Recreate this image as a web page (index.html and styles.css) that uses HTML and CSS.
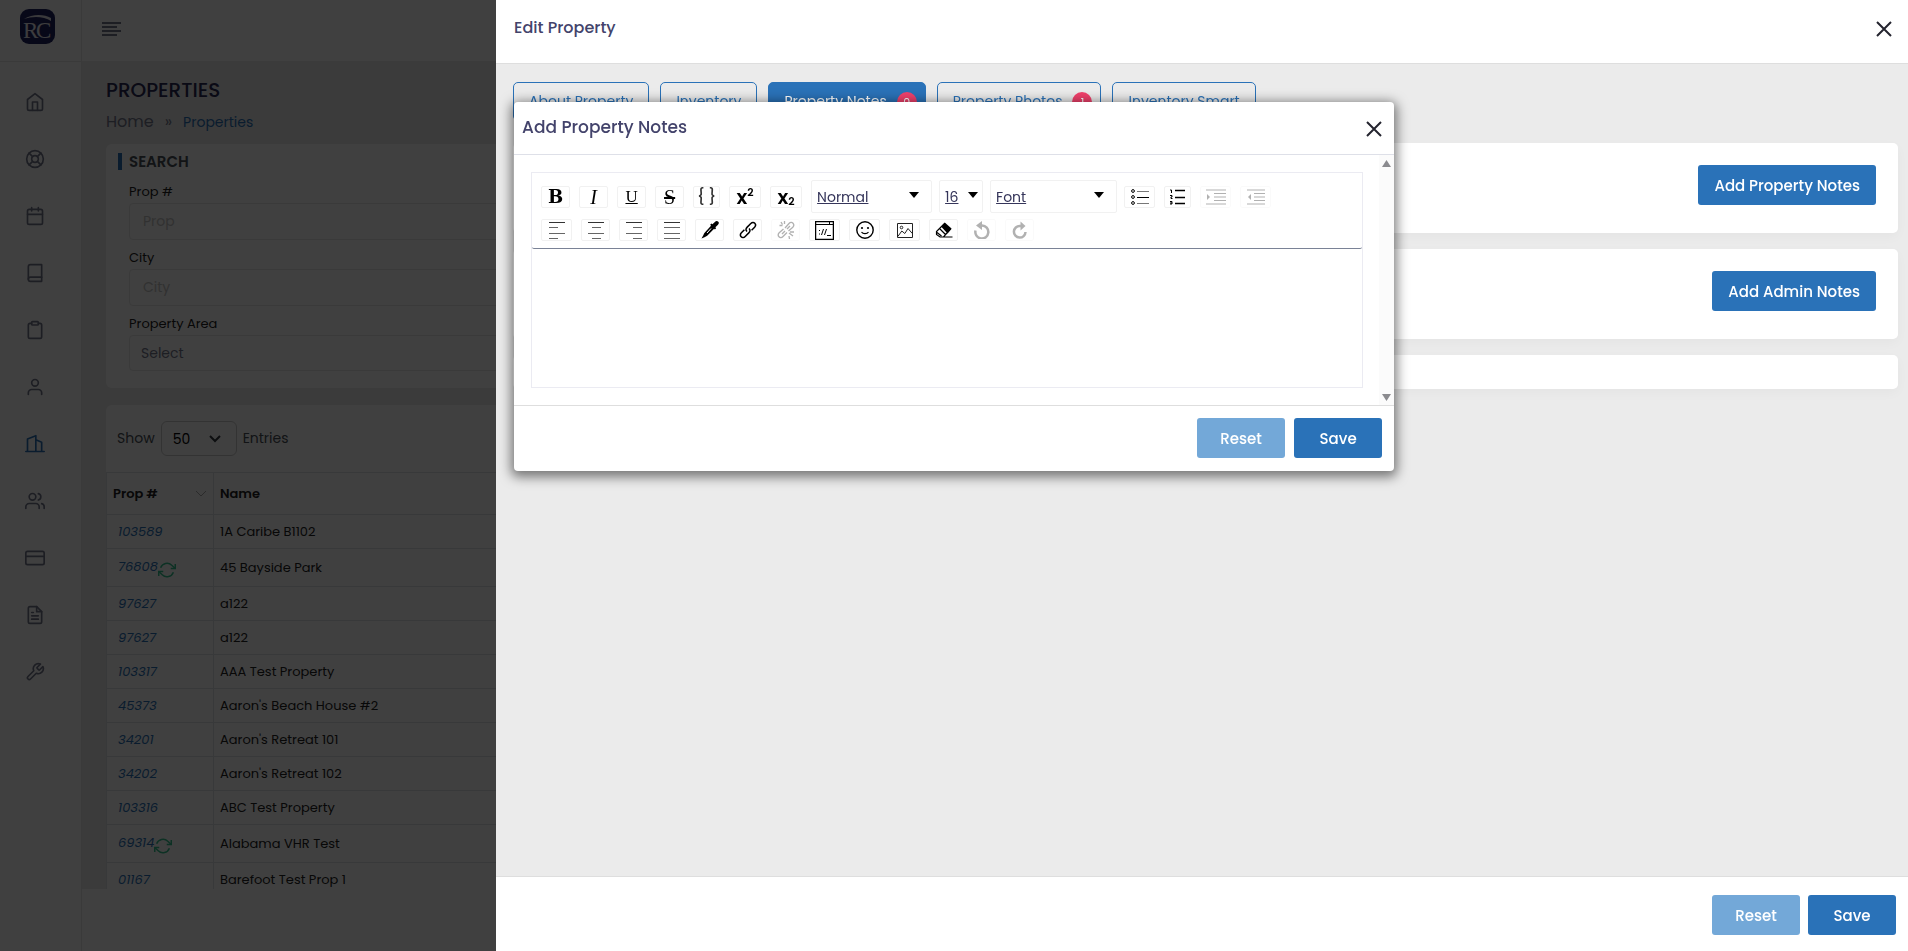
FILE: index.html
```html
<!DOCTYPE html>
<html lang="en">
<head>
  <meta charset="UTF-8" />
  <meta name="viewport" content="width=device-width, initial-scale=1.0" />
  <title>Properties</title>
  <link rel="stylesheet" href="styles.css">
</head>
<body>

  <div class="layout">
    <aside class="sidebar">
      <a href="#" class="logo" aria-label="Dashboard">
        <svg width="35" height="35" viewBox="0 0 35 35">
          <rect width="35" height="35" rx="9" fill="#1f2362"/>
          <path d="M4 10C12 5 24 5 31 9v3C24 7 12 7 4 10z" fill="#e8e8f0"/>
          <text x="3" y="29" font-family="Liberation Serif, serif" font-size="23" fill="#f0f0f5">R</text>
          <text x="16" y="29" font-family="Liberation Serif, serif" font-size="23" fill="#f0f0f5">C</text>
        </svg>
      </a>
      <nav class="side-nav">
        <a href="#" aria-label="Home"><svg viewBox="0 0 24 24"><path d="M3 9l9-7 9 7v11a2 2 0 0 1-2 2H5a2 2 0 0 1-2-2z"/><path d="M9 22V12h6v10"/></svg></a>
        <a href="#" aria-label="Support"><svg viewBox="0 0 24 24"><circle cx="12" cy="12" r="10"/><circle cx="12" cy="12" r="4"/><path d="M4.93 4.93l4.24 4.24M14.83 14.83l4.24 4.24M14.83 9.17l4.24-4.24M4.93 19.07l4.24-4.24"/></svg></a>
        <a href="#" aria-label="Calendar"><svg viewBox="0 0 24 24"><rect x="3" y="4" width="18" height="18" rx="2"/><path d="M16 2v4M8 2v4M3 10h18"/></svg></a>
        <a href="#" aria-label="Ledger"><svg viewBox="0 0 24 24"><path d="M4 19.5A2.5 2.5 0 0 1 6.5 17H20"/><path d="M6.5 2H20v20H6.5A2.5 2.5 0 0 1 4 19.5v-15A2.5 2.5 0 0 1 6.5 2z"/></svg></a>
        <a href="#" aria-label="Tasks"><svg viewBox="0 0 24 24"><path d="M16 4h2a2 2 0 0 1 2 2v14a2 2 0 0 1-2 2H6a2 2 0 0 1-2-2V6a2 2 0 0 1 2-2h2"/><rect x="8" y="2" width="8" height="4" rx="1"/></svg></a>
        <a href="#" aria-label="Owner"><svg viewBox="0 0 24 24"><path d="M20 21v-2a4 4 0 0 0-4-4H8a4 4 0 0 0-4 4v2"/><circle cx="12" cy="7" r="4"/></svg></a>
        <a href="#" class="active" aria-label="Properties"><svg viewBox="0 0 24 24"><path d="M1 21h22M3 21V6l10-4v19M13 7l7 3v11"/></svg></a>
        <a href="#" aria-label="Users"><svg viewBox="0 0 24 24"><path d="M17 21v-2a4 4 0 0 0-4-4H5a4 4 0 0 0-4 4v2"/><circle cx="9" cy="7" r="4"/><path d="M23 21v-2a4 4 0 0 0-3-3.87M16 3.13a4 4 0 0 1 0 7.75"/></svg></a>
        <a href="#" aria-label="Payments"><svg viewBox="0 0 24 24"><rect x="1" y="4" width="22" height="16" rx="2"/><path d="M1 10h22"/></svg></a>
        <a href="#" aria-label="Reports"><svg viewBox="0 0 24 24"><path d="M14 2H6a2 2 0 0 0-2 2v16a2 2 0 0 0 2 2h12a2 2 0 0 0 2-2V8z"/><path d="M14 2v6h6M16 13H8M16 17H8M10 9H8"/></svg></a>
        <a href="#" aria-label="Settings"><svg viewBox="0 0 24 24"><path d="M14.7 6.3a1 1 0 0 0 0 1.4l1.6 1.6a1 1 0 0 0 1.4 0l3.77-3.77a6 6 0 0 1-7.94 7.94l-6.91 6.91a2.12 2.12 0 0 1-3-3l6.91-6.91a6 6 0 0 1 7.94-7.94l-3.76 3.76z"/></svg></a>
      </nav>
    </aside>

    <div class="page">
      <header class="topbar">
        <button type="button" class="menu-toggle" aria-label="Toggle menu">
          <svg width="20" height="14" viewBox="0 0 20 14"><path d="M0 1h19M0 5h15M0 9h19M0 13h15" stroke="#74788d" stroke-width="2"/></svg>
        </button>
      </header>

      <main class="content">
        <h1>PROPERTIES</h1>
        <div class="breadcrumb">
          <a href="#" class="crumb-home">Home</a>
          <span>»</span>
          <a href="#" class="crumb-current">Properties</a>
        </div>

        <section class="card search">
          <h2>SEARCH</h2>
          <div class="fields">
            <label for="prop">Prop #</label>
            <input type="text" id="prop" placeholder="Prop">
            <label for="city">City</label>
            <input type="text" id="city" placeholder="City">
            <label for="area">Property Area</label>
            <select id="area"><option>Select</option></select>
          </div>
        </section>

        <section class="card listing">
          <div class="entries">
            <label for="entries">Show</label>
            <select id="entries"><option>50</option></select>
            <span>Entries</span>
          </div>
          <table>
            <thead>
              <tr>
                <th class="col-id"><span class="th-sort">Prop # <svg width="12" height="7" viewBox="0 0 12 7"><path d="M1 1l5 5 5-5" fill="none" stroke="#aaa"/></svg></span></th>
                <th>Name</th>
              </tr>
            </thead>
            <tbody>
              <tr><td><a href="#">103589</a></td><td>1A Caribe B1102</td></tr>
              <tr class="synced"><td><a href="#">76808</a><svg class="sync" viewBox="0 0 24 24"><path d="M23 4v6h-6M1 20v-6h6"/><path d="M3.51 9a9 9 0 0 1 14.85-3.36L23 10M1 14l4.64 4.36A9 9 0 0 0 20.49 15"/></svg></td><td>45 Bayside Park</td></tr>
              <tr><td><a href="#">97627</a></td><td>a122</td></tr>
              <tr><td><a href="#">97627</a></td><td>a122</td></tr>
              <tr><td><a href="#">103317</a></td><td>AAA Test Property</td></tr>
              <tr><td><a href="#">45373</a></td><td>Aaron's Beach House #2</td></tr>
              <tr><td><a href="#">34201</a></td><td>Aaron's Retreat 101</td></tr>
              <tr><td><a href="#">34202</a></td><td>Aaron's Retreat 102</td></tr>
              <tr><td><a href="#">103316</a></td><td>ABC Test Property</td></tr>
              <tr class="synced"><td><a href="#">69314</a><svg class="sync" viewBox="0 0 24 24"><path d="M23 4v6h-6M1 20v-6h6"/><path d="M3.51 9a9 9 0 0 1 14.85-3.36L23 10M1 14l4.64 4.36A9 9 0 0 0 20.49 15"/></svg></td><td>Alabama VHR Test</td></tr>
              <tr><td><a href="#">01167</a></td><td>Barefoot Test Prop 1</td></tr>
            </tbody>
          </table>
        </section>
      </main>
      <footer class="page-footer"></footer>
    </div>
  </div>

  <div class="backdrop"></div>

  <!-- Edit property panel -->
  <section class="panel">
    <header class="panel-header">
      <h2>Edit Property</h2>
      <button type="button" class="close" aria-label="Close panel">
        <svg width="16" height="16" viewBox="0 0 16 16"><path d="M1 1l14 14M15 1L1 15"/></svg>
      </button>
    </header>

    <div class="panel-body">
      <nav class="tabs">
        <button type="button">About Property</button>
        <button type="button">Inventory</button>
        <button type="button" class="selected">Property Notes <span class="count">0</span></button>
        <button type="button">Property Photos <span class="count">1</span></button>
        <button type="button">Inventory Smart</button>
      </nav>
      <div class="notes-card">
        <button type="button" class="btn btn-primary">Add Property Notes</button>
      </div>
      <div class="notes-card">
        <button type="button" class="btn btn-primary">Add Admin Notes</button>
      </div>
      <div class="notes-card empty"></div>
    </div>

    <footer class="panel-footer">
      <button type="button" class="btn btn-light">Reset</button>
      <button type="button" class="btn btn-primary">Save</button>
    </footer>

    <!-- Add notes modal -->
    <div class="modal" role="dialog" aria-labelledby="modal-title">
      <header class="modal-header">
        <h3 id="modal-title">Add Property Notes</h3>
        <button type="button" class="close close-bold" aria-label="Close">
          <svg width="16" height="16" viewBox="0 0 16 16"><path d="M1 1l14 14M15 1L1 15"/></svg>
        </button>
      </header>

      <div class="modal-body">
        <div class="editor">
          <div class="toolbar">
            <div class="tool-row">
              <button type="button" class="tool bold" aria-label="Bold">B</button>
              <button type="button" class="tool italic" aria-label="Italic">I</button>
              <button type="button" class="tool underline" aria-label="Underline">U</button>
              <button type="button" class="tool strike" aria-label="Strikethrough">S</button>
              <button type="button" class="tool mono" aria-label="Monospace">{ }</button>
              <button type="button" class="tool script" aria-label="Superscript">x<sup>2</sup></button>
              <button type="button" class="tool script" aria-label="Subscript">x<sub>2</sub></button>
              <select class="block-type" aria-label="Block type"><option>Normal</option></select>
              <select class="font-size" aria-label="Font size"><option>16</option></select>
              <select class="font-family" aria-label="Font"><option>Font</option></select>
              <button type="button" class="tool wide" aria-label="Bulleted list">
                <svg width="18" height="16" viewBox="0 0 18 16"><g fill="none" stroke="#000"><circle cx="2" cy="2" r="1.4"/><circle cx="2" cy="8" r="1.4"/><circle cx="2" cy="14" r="1.4"/><path d="M6 8.5h12"/><path d="M6 2.5h12M6 14.5h12" stroke="#777"/></g></svg>
              </button>
              <button type="button" class="tool narrow" aria-label="Numbered list">
                <svg width="15" height="16" viewBox="0 0 15 16"><path d="M5 1.5h10M5 8.500h10M5 14.500h10" stroke="#000" stroke-width="1.500"/><path d="M0 1h1.500v3M0 6.500h2v1.500H1v1.500h1.500M0 12.500h2v2.500H0M0 14h2" fill="none" stroke="#000"/></svg>
              </button>
              <button type="button" class="tool wide" disabled aria-label="Indent">
                <svg width="20" height="16" viewBox="0 0 20 16"><path d="M0 1h20M8 4.5h12M8 8h12M8 11.5h12M0 15h20" stroke="#000"/><path d="M1 5l3 3-3 3z"/></svg>
              </button>
              <button type="button" class="tool wide" disabled aria-label="Outdent">
                <svg width="18" height="16" viewBox="0 0 18 16"><path d="M0 1h18M7 4.5h11M7 8h11M7 11.5h11M0 15h18" stroke="#000"/><path d="M4 5L1 8l3 3z"/></svg>
              </button>
            </div>
            <div class="tool-row">
              <button type="button" class="tool wide" aria-label="Align left">
                <svg width="16" height="18" viewBox="0 0 16 18"><path d="M0 1.5h16" stroke="#333"/><path d="M0 6.5h9M0 12.500h16M0 17.500h9" stroke="#666"/></svg>
              </button>
              <button type="button" class="tool" aria-label="Align center">
                <svg width="16" height="18" viewBox="0 0 16 18"><path d="M0 1.5h16" stroke="#333"/><path d="M4 6.5h9M0 12.500h16M4 17.500h9" stroke="#666"/></svg>
              </button>
              <button type="button" class="tool" aria-label="Align right">
                <svg width="16" height="18" viewBox="0 0 16 18"><path d="M0 1.5h16" stroke="#333"/><path d="M7 6.5h9M0 12.500h16M7 17.500h9" stroke="#666"/></svg>
              </button>
              <button type="button" class="tool" aria-label="Justify">
                <svg width="16" height="18" viewBox="0 0 16 18"><path d="M0 1.5h16" stroke="#333"/><path d="M0 6.5h16M0 12.500h16M0 17.500h16" stroke="#666"/></svg>
              </button>
              <button type="button" class="tool" aria-label="Text color">
                <svg width="18" height="18" viewBox="0 0 18 18"><path d="M17.3.8c-1-1-2.400-.9-3.400.1l-2.500 2.300-1-.7-1.200 1.300.8.9-6.600 7.200c-.7.8-.8 2-1.500 3L.5 17.500l3-1.200c.9-.5 2-.8 2.700-1.500l6.900-7 .8.700 1.200-1.200-.7-1.100 2.600-2.500c1-1 1.100-2.100.3-2.900z"/><path d="M6 12l4-4.500" stroke="#fff"/></svg>
              </button>
              <button type="button" class="tool" aria-label="Link">
                <svg width="18" height="18" viewBox="0 0 18 18"><g fill="none" stroke="#000" stroke-width="1.5"><path d="M8 10.500c-1.500-1.500-1.200-3 .2-4.400l3.600-3.600c1.400-1.400 3-1.400 4-.3s1.100 2.600-.2 4l-3 3"/><path d="M10 7.500c1.500 1.500 1.200 3-.2 4.400l-3.600 3.600c-1.400 1.400-3 1.400-4 .3s-1.100-2.600.2-4l3-3"/></g></svg>
              </button>
              <button type="button" class="tool" disabled aria-label="Unlink">
                <svg width="18" height="18" viewBox="0 0 18 18"><g fill="none" stroke="#000" stroke-width="1.3"><path d="M8 7l4-4.500c1.400-1.400 3-1.400 4-.3s1.100 2.600-.2 4L11.500 10"/><path d="M10 11.500l-4 4c-1.400 1.400-3 1.400-4 .3s-1.100-2.600.2-4L6.500 8M5 13l3-3M10 8l3-3M2.500 4.500h3M4 1l1.500 2.500M7.500 0v3M12 12l4 3M12 15l.5 3M13 11h4"/></g></svg>
              </button>
              <button type="button" class="tool wide" aria-label="Embed">
                <svg width="19" height="19" viewBox="0 0 19 19"><g fill="none" stroke="#000"><path d="M.5.5h18v18H.5z" stroke-width="1.500"/><path d="M1 3.500h17M14.500 1v2.500"/><path d="M6.500 14l2-6M9.500 14l2-6M12 14.500h4M4.500 9v1M4.500 12.500v1"/></g></svg>
              </button>
              <button type="button" class="tool wide" aria-label="Emoji">
                <svg width="18" height="18" viewBox="0 0 18 18"><circle cx="9" cy="9" r="8.200" fill="none" stroke="#000" stroke-width="1.400"/><circle cx="6" cy="7" r="1.100"/><circle cx="12" cy="7" r="1.100"/><path d="M5.500 11c1.500 2.200 5.500 2.200 7 0" fill="none" stroke="#000" stroke-width="1.200"/></svg>
              </button>
              <button type="button" class="tool wide" aria-label="Image">
                <svg width="16" height="15" viewBox="0 0 16 15"><g fill="none" stroke="#222"><path d="M.5.5h15v14H.5z"/><circle cx="4.500" cy="4.500" r="1.300"/><path d="M.8 13.500l4-5.500 3 2.500L11 5.500l4.300 5"/></g></svg>
              </button>
              <button type="button" class="tool" aria-label="Eraser">
                <svg width="18" height="16" viewBox="0 0 18 16"><path d="M10 .8l6.500 5.700-4 5L6.500 5z"/><path d="M10 1L1.500 9.500v3L5 15h3.500l7.500-8.500M5 7l5.500 5.500M2 10.500L6.500 14M8 15h9.500" fill="none" stroke="#000" stroke-width="1.200"/></svg>
              </button>
              <button type="button" class="tool" disabled aria-label="Undo">
                <svg width="16" height="18" viewBox="0 0 16 18"><path d="M1.500 9.500A6.500 6.500 0 1 0 8 4.500H5" fill="none" stroke="#000" stroke-width="2.500"/><path d="M2 4.500L8 0v9z"/></svg>
              </button>
              <button type="button" class="tool" disabled aria-label="Redo">
                <svg width="16" height="18" viewBox="0 0 16 18"><path d="M13.500 11A5.800 5.800 0 1 1 8 5h3" fill="none" stroke="#000" stroke-width="2.500"/><path d="M13.500 5L8.500.5v9z"/></svg>
              </button>
            </div>
          </div>
          <textarea class="note-text" aria-label="Note"></textarea>
        </div>
        <div class="scroll-track">
          <svg width="9" height="7" viewBox="0 0 9 7"><path d="M4.5 0L9 7H0z"/></svg>
          <svg width="9" height="7" viewBox="0 0 9 7"><path d="M4.5 7L0 0h9z"/></svg>
        </div>
      </div>

      <footer class="modal-footer">
        <button type="button" class="btn btn-light">Reset</button>
        <button type="button" class="btn btn-primary">Save</button>
      </footer>
    </div>
  </section>

</body>
</html>
```
FILE: styles.css
```css
* {
  box-sizing: border-box;
}
body {
  margin: 0;
  height: 100vh;
  overflow: hidden;
  font-family: Poppins, Inter, sans-serif;
  font-size: 14px;
  color: #222;
  background: #fff;
}
h1, h2, h3 {
  margin: 0;
  font-weight: 500;
}
button, input, select, textarea {
  font-family: inherit;
}
button {
  cursor: pointer;
}
a {
  text-decoration: none;
}

/* Page */
.layout {
  display: flex;
  height: 100%;
}
.sidebar {
  flex: none;
  width: 82px;
  border-right: 1px solid #e6e6e6;
}
.logo {
  display: block;
  height: 62px;
  padding: 9px 20px;
  border-bottom: 1px solid #e6e6e6;
}
.side-nav {
  display: flex;
  flex-direction: column;
  gap: 37px;
  padding: 30px 25px;
}
.side-nav a {
  height: 20px;
  color: #74788d;
}
.side-nav a.active {
  color: #2a72b8;
}
.side-nav svg {
  width: 20px;
  height: 20px;
  fill: none;
  stroke: currentColor;
  stroke-width: 2;
  stroke-linecap: round;
  stroke-linejoin: round;
}
.page {
  flex: 1;
  display: flex;
  flex-direction: column;
  min-width: 0;
}
.topbar {
  flex: none;
  height: 61px;
  padding: 18px 20px;
}
.menu-toggle {
  display: block;
  padding: 4px 0;
  border: none;
  background: none;
}
.menu-toggle svg {
  display: block;
}
.content {
  flex: 1;
  overflow: hidden;
  padding: 15px 24px 0;
  background: #ebebeb;
}
.page-footer {
  flex: none;
  height: 62px;
}
h1 {
  font-size: 20px;
  line-height: 28px;
  color: #2a2a55;
}
.breadcrumb {
  display: flex;
  align-items: baseline;
  gap: 11px;
  padding-bottom: 4px;
  line-height: 36px;
  font-size: 16px;
  color: #74788d;
}
.crumb-home {
  color: #74788d;
}
.crumb-current {
  font-size: 14px;
  color: #2a72b8;
}
.card {
  background: #fff;
  border-radius: 6px;
}
.search {
  padding: 9px 12px 17px;
  margin-bottom: 17px;
}
.search h2 {
  padding-left: 7px;
  border-left: 4px solid #2a72b8;
  font-size: 15px;
  font-weight: 600;
  line-height: 17px;
  color: #495057;
}
.fields {
  display: flex;
  flex-direction: column;
  padding: 11px 11px 0;
}
.fields label {
  line-height: 22px;
  font-size: 13px;
}
.fields input, .fields select {
  height: 37px;
  margin-bottom: 7px;
  padding: 0 13px;
  border: 1px solid #e6e6e6;
  border-radius: 4px;
  background: #fff;
  font-size: 14px;
}
.fields select {
  appearance: none;
  height: 36px;
  margin-bottom: 0;
  padding: 0 11px;
  color: #74788d;
}
.fields input::placeholder {
  color: #c4c4c4;
}
.entries {
  display: flex;
  align-items: center;
  gap: 6px;
  padding: 16px 11px;
  color: #495057;
}
.entries select {
  width: 76px;
  height: 35px;
  padding: 0 11px;
  appearance: none;
  border: 1px solid #ccc;
  border-radius: 6px;
  font-size: 14px;
  background: #fff url("data:image/svg+xml,%3Csvg xmlns='http://www.w3.org/2000/svg' width='12' height='8'%3E%3Cpath d='M1 1l5 5 5-5' fill='none' stroke='%23343a40' stroke-width='2'/%3E%3C/svg%3E") no-repeat right 15px center;
}
table {
  width: 100%;
  border-collapse: collapse;
}
th, td {
  height: 34px;
  padding: 0 6px;
  border: 1px solid #dfe2e6;
  text-align: left;
  font-size: 13px;
  color: #222;
}
th {
  height: 42px;
  font-weight: 600;
}
.col-id {
  width: 107px;
}
.th-sort {
  display: flex;
  align-items: center;
  justify-content: space-between;
}
td:first-child {
  padding-left: 11px;
}
td a {
  color: #2a72b8;
  font-style: italic;
}
.synced td {
  height: 38px;
}
.sync {
  width: 18px;
  height: 18px;
  vertical-align: -8px;
  fill: none;
  stroke: #34c38f;
  stroke-width: 2;
}
.backdrop {
  position: fixed;
  inset: 0;
  background: rgba(0, 0, 0, 0.75);
}

/* Panel */
.panel {
  position: fixed;
  top: 0;
  right: 0;
  bottom: 0;
  width: 74%;
  display: flex;
  flex-direction: column;
  background: #ebebeb;
}
.panel-header {
  display: flex;
  justify-content: space-between;
  height: 64px;
  padding: 16px 16px 0 18px;
  border-bottom: 1px solid #dedede;
  background: #fff;
}
.panel-header h2 {
  font-size: 16px;
  line-height: 24px;
  color: #43436b;
}
.close {
  align-self: flex-start;
  padding: 5px 0;
  border: none;
  background: none;
}
.close svg {
  display: block;
  fill: none;
  stroke: #24242f;
  stroke-width: 2;
}
.panel-body {
  flex: 1;
  padding: 18px 10px 0 17px;
}
.tabs {
  display: flex;
  gap: 11px;
  margin-bottom: 22px;
}
.tabs button {
  display: flex;
  align-items: center;
  gap: 10px;
  height: 39px;
  padding: 0 15px;
  border: 1px solid #2a72b8;
  border-radius: 5px;
  background: transparent;
  color: #2a72b8;
  font-size: 14px;
}
.tabs .selected {
  background: #2a72b8;
  color: #fff;
}
.tabs .count {
  width: 20px;
  height: 20px;
  margin-right: -7px;
  border-radius: 50%;
  background: #f1416c;
  color: #fff;
  font-size: 11px;
  line-height: 20px;
}
.notes-card {
  display: flex;
  justify-content: flex-end;
  align-items: flex-start;
  height: 90px;
  margin-bottom: 16px;
  padding: 22px;
  border-radius: 5px;
  background: #fff;
  box-shadow: 0 4px 12px rgba(0, 0, 0, 0.03);
}
.notes-card.empty {
  height: 34px;
  padding: 0;
}
.btn {
  height: 40px;
  min-width: 88px;
  padding: 0 16px;
  border: none;
  border-radius: 3px;
  color: #fff;
  font-size: 15px;
  font-weight: 500;
}
.btn-primary {
  background: #2a72b8;
}
.btn-light {
  background: #73a8d8;
}
.panel-footer {
  display: flex;
  justify-content: flex-end;
  gap: 8px;
  padding: 18px 12px 16px;
  border-top: 1px solid #dedede;
  background: #fff;
}

/* Modal */
.modal {
  position: absolute;
  top: 102px;
  left: 18px;
  width: 90%;
  max-width: 880px;
  border-radius: 4px;
  background: #fff;
  box-shadow: 0 3px 12px 3px rgba(0, 0, 0, 0.5);
}
.modal-header {
  display: flex;
  justify-content: space-between;
  height: 53px;
  padding: 13px 12px 0 8px;
  border-bottom: 1px solid #dee0e8;
}
.modal-header h3 {
  font-size: 17px;
  line-height: 24px;
  color: #43436b;
}
.close-bold {
  padding: 6px 0;
}
.modal-body {
  display: flex;
}
.editor {
  flex: 1;
  margin: 17px 16px 17px 17px;
  border: 1px solid #ebebf2;
}
.toolbar {
  display: flex;
  flex-direction: column;
  gap: 6px;
  padding: 7px 9px;
  border-bottom: 1px solid #7a8296;
  border-radius: 2px;
}
.tool-row {
  display: flex;
  align-items: center;
  gap: 9px;
}
.tool {
  display: flex;
  align-items: center;
  justify-content: center;
  width: 29px;
  height: 22px;
  padding: 0;
  border: 1px solid #f1f1f1;
  border-radius: 2px;
  background: #fff;
  color: #000;
  font-size: 20px;
  line-height: 20px;
}
.tool.wide {
  width: 31px;
}
.tool.narrow {
  width: 27px;
}
.tool:disabled {
  opacity: 0.3;
}
.tool.bold {
  font-family: "DejaVu Serif", serif;
  font-size: 18px;
  font-weight: bold;
}
.tool.italic, .tool.underline, .tool.strike {
  font-family: "Liberation Serif", serif;
}
.tool.italic {
  font-style: italic;
}
.tool.underline {
  font-size: 17px;
  text-decoration: underline;
}
.tool.strike {
  text-decoration: line-through;
}
.tool.mono {
  width: 27px;
  font-size: 15px;
  font-weight: 500;
  color: #333;
}
.tool.script {
  width: 32px;
  font-weight: 600;
}
.script sup, .script sub {
  font-size: 11px;
  line-height: 11px;
}
.script sup {
  align-self: flex-start;
}
.script sub {
  align-self: flex-end;
}
.tool-row select {
  height: 33px;
  padding: 0 5px;
  appearance: none;
  border: 1px solid #f1f1f1;
  border-radius: 2px;
  color: #35355a;
  font-size: 14px;
  text-decoration: underline;
  background: #fff url("data:image/svg+xml,%3Csvg xmlns='http://www.w3.org/2000/svg' width='10' height='6'%3E%3Cpath d='M0 0h10L5 6z'/%3E%3C/svg%3E") no-repeat right 12px top 11px;
}
.tool-row .block-type {
  width: 121px;
}
.tool-row .font-size {
  width: 44px;
  margin: 0 -2px;
  background-position: right 4px top 11px;
}
.tool-row .font-family {
  width: 127px;
  margin-right: -2px;
}
.note-text {
  display: block;
  width: 100%;
  height: 138px;
  padding: 10px;
  border: none;
  resize: none;
  outline: none;
}
.scroll-track {
  display: flex;
  flex-direction: column;
  justify-content: space-between;
  align-items: center;
  width: 15px;
  padding: 5px 0 4px;
  background: #fbfbfb;
}
.scroll-track svg {
  fill: #8b8b8f;
}
.modal-footer {
  display: flex;
  justify-content: flex-end;
  gap: 9px;
  padding: 12px 12px 13px;
  border-top: 1px solid #dedede;
}
```
